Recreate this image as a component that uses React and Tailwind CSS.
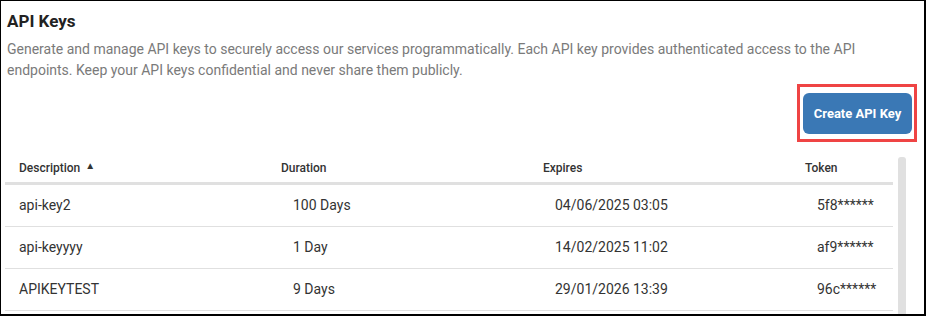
import { useState } from 'react';

const rows = [
    { description: 'api-key2', duration: '100 Days', expires: '04/06/2025 03:05', token: '5f8******' },
    { description: 'api-keyyyy', duration: '1 Day', expires: '14/02/2025 11:02', token: 'af9******' },
    { description: 'APIKEYTEST', duration: '9 Days', expires: '29/01/2026 13:39', token: '96c******' },
];

const App = () => {
    const [sortAsc, setSortAsc] = useState(true);

    return (
        <div className="w-[926px] h-[316px] overflow-hidden bg-white border-l border-t border-r-2 border-b-2 border-black font-['Roboto',sans-serif]">
            {/* Cabecera */}
            <div className="pl-[6px] pr-[7px]">
                <h1 className="pt-[8px] text-[17px] leading-[24px] font-bold text-[#222]">API Keys</h1>
                <p className="mt-[6px] text-[14px] leading-[21px] text-[#7a7a7a]">
                    Generate and manage API keys to securely access our services programmatically. Each API key provides authenticated access to the API endpoints. Keep your API keys confidential and never share them publicly.
                </p>
                <div className="flex justify-end mt-[3px]">
                    <div className="border-[3px] border-[#ef4444] pl-[3px] pr-[2px] pt-[6px] pb-[5px]">
                        <button className="w-[109px] h-[41px] rounded-[6px] bg-[#3a78b5] text-white text-[13px] font-bold">
                            Create API Key
                        </button>
                    </div>
                </div>
            </div>

            {/* Tabla */}
            <div className="flex pl-[4px] mt-[15px]">
                <div className="w-[888px]">
                    <div className="grid grid-cols-[262px_262px_262px_102px] h-[28px] border-b-[3px] border-[#e0e0e0] text-[12px] font-medium text-[#333]">
                        <button onClick={() => setSortAsc(!sortAsc)} className="flex items-start pt-[2px] pl-[14px] gap-[5px] text-left">
                            <span>Description</span>
                            <span className="text-[10px] leading-[14px]">{sortAsc ? '▲' : '▼'}</span>
                        </button>
                        <div className="pt-[2px] pl-[14px]">Duration</div>
                        <div className="pt-[2px] pl-[14px]">Expires</div>
                        <div className="pt-[2px] pl-[14px]">Token</div>
                    </div>
                    {rows.map((row) => (
                        <div key={row.token} className="grid grid-cols-[262px_262px_262px_102px] h-[42px] items-center border-b border-[#e0e0e0] text-[14px] text-[#333]">
                            <div className="pl-[14px]">{row.description}</div>
                            <div className="pl-[26px]">{row.duration}</div>
                            <div className="pl-[26px]">{row.expires}</div>
                            <div className="pl-[26px]">{row.token}</div>
                        </div>
                    ))}
                </div>
                {/* Barra de desplazamiento */}
                <div className="ml-[5px] w-[8px] h-[200px] rounded-[3px] bg-[#e0e0e0]"></div>
            </div>
        </div>
    );
};

export default App;
